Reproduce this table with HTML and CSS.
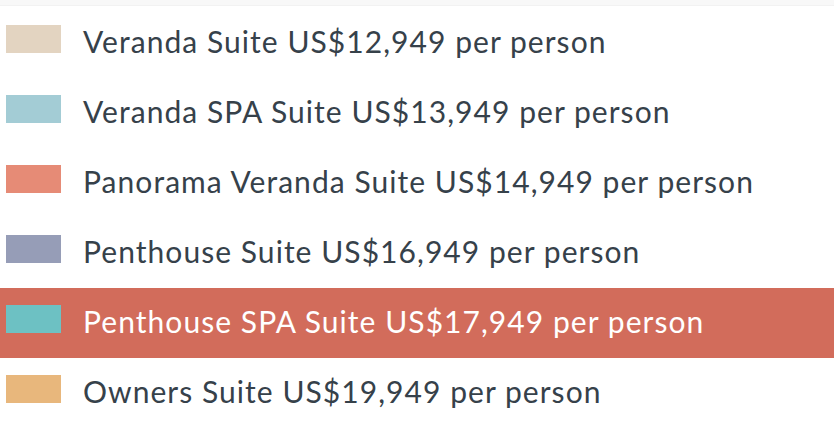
FILE: index.html
```html
<!DOCTYPE html>
<html>
<head>
<meta charset="utf-8">
<link rel="stylesheet" href="styles.css">
</head>
<body>
<div class="topbar"></div>
<ul class="legend">
  <li class="row"><span class="swatch sw1"></span><span class="label">Veranda Suite US$12,949 per person</span></li>
  <li class="row"><span class="swatch sw2"></span><span class="label">Veranda SPA Suite US$13,949 per person</span></li>
  <li class="row"><span class="swatch sw3"></span><span class="label">Panorama Veranda Suite US$14,949 per person</span></li>
  <li class="row"><span class="swatch sw4"></span><span class="label">Penthouse Suite US$16,949 per person</span></li>
  <li class="row active"><span class="swatch sw5"></span><span class="label">Penthouse SPA Suite US$17,949 per person</span></li>
  <li class="row"><span class="swatch sw6"></span><span class="label">Owners Suite US$19,949 per person</span></li>
</ul>
</body>
</html>
```
FILE: styles.css
```css
html, body {
  margin: 0;
  padding: 0;
  background: #ffffff;
}
body {
  font-family: Lato, "Open Sans", sans-serif;
  color: #36414a;
}
.topbar {
  height: 6px;
  background: #f8f8f8;
  border-bottom: 1px solid #f2f2f2;
  box-sizing: border-box;
}
.legend {
  list-style: none;
  margin: 2px 0 0 0;
  padding: 0;
}
.row {
  height: 70px;
  box-sizing: border-box;
  display: flex;
  align-items: baseline;
  padding: 17px 0 0 6px;
}
.swatch {
  width: 55px;
  height: 28px;
  flex: none;
  margin-right: 22px;
}
.label {
  font-size: 30px;
  font-weight: 400;
  letter-spacing: 1.05px;
  line-height: 1;
  white-space: nowrap;
}
.row.active {
  background: #d26c5b;
  color: #ffffff;
}
.sw1 { background: #e3d4c1; }
.sw2 { background: #a3ccd5; }
.sw3 { background: #e68b76; }
.sw4 { background: #969db7; }
.sw5 { background: #6dc1c3; }
.sw6 { background: #e8b77c; }
```
